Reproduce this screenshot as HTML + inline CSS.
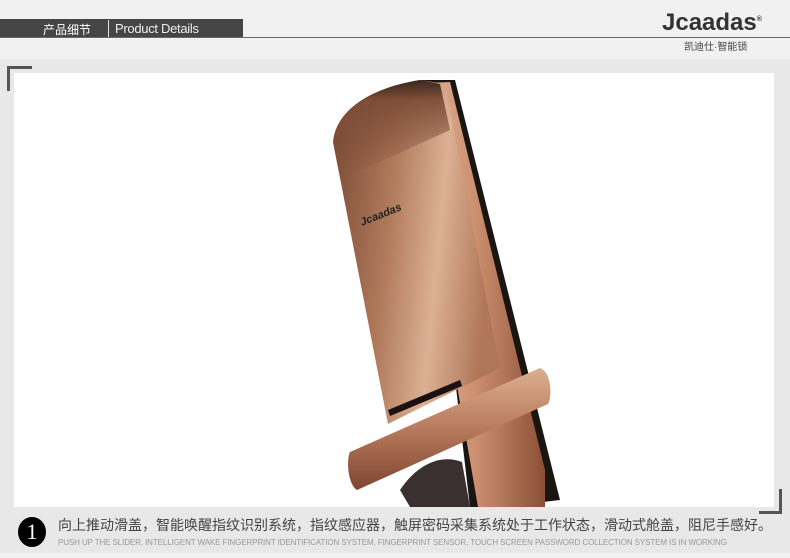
<!DOCTYPE html>
<html><head><meta charset="utf-8"><style>
body{margin:0;width:790px;height:558px;overflow:hidden;background:#f1f1f1;font-family:"Liberation Sans","Noto Sans CJK SC",sans-serif;position:relative}
.bar{position:absolute;left:0;top:19px;width:243px;height:18px;background:#454545}
.line{position:absolute;left:0;top:37px;width:790px;height:1px;background:#6a6a6a}
.t1{position:absolute;left:43px;top:21px;color:#fff;font-size:12px}
.sep{position:absolute;left:108px;top:20px;width:1px;height:17px;background:#ddd}
.t2{position:absolute;left:115px;top:21px;color:#eee;font-size:13px;letter-spacing:-.3px}
.logo{position:absolute;left:662px;top:9px;font-size:24px;font-weight:bold;color:#333;letter-spacing:0px}
.sub{position:absolute;left:684px;top:38px;font-size:10px;color:#444}
.panel{position:absolute;left:0;top:59px;width:790px;height:494px;background:#e8e8e8}
.img{position:absolute;left:14px;top:73px;width:760px;height:434px;background:#fff;overflow:hidden}
.c1{position:absolute;left:7px;top:66px;width:22px;height:22px;border-left:3px solid #555;border-top:3px solid #555}
.c2{position:absolute;left:759px;top:489px;width:20px;height:22px;border-right:3px solid #555;border-bottom:3px solid #555}
.num{position:absolute;left:18px;top:517px;width:28px;height:30px;border-radius:50%;background:#000;color:#fff;font-size:22px;text-align:center;line-height:30px;font-family:"Liberation Serif",serif}
.cn{position:absolute;left:58px;top:515px;font-size:14px;color:#444}
.en{position:absolute;left:58px;top:538px;font-size:8px;color:#999;letter-spacing:-.1px}
</style></head><body>
<div class="bar"></div><div class="line"></div>
<div class="t1">产品细节</div><div class="sep"></div><div class="t2">Product Details</div>
<div class="logo">Jcaadas<sup style="font-size:7px">®</sup></div>
<div class="sub">凯迪仕·智能锁</div>
<div class="panel"></div>
<div class="img">
<svg width="760" height="434" viewBox="14 73 760 434">
<defs>
<linearGradient id="g1" x1="0" y1="0" x2="1" y2="0.2"><stop offset="0" stop-color="#7a4a34"/><stop offset=".4" stop-color="#b07a5c"/><stop offset=".7" stop-color="#dcb094"/><stop offset="1" stop-color="#b07658"/></linearGradient>
<linearGradient id="g2" x1="0" y1="0" x2="1" y2="0"><stop offset="0" stop-color="#e6bea2"/><stop offset=".5" stop-color="#cc9070"/><stop offset="1" stop-color="#8b4f36"/></linearGradient>
<linearGradient id="g3" x1="0" y1="0" x2="0" y2="1"><stop offset="0" stop-color="#2a1a14"/><stop offset=".2" stop-color="#7a4a34"/><stop offset="1" stop-color="#7a4a34" stop-opacity="0"/></linearGradient>
<linearGradient id="g4" x1="0" y1="0" x2="0" y2="1"><stop offset="0" stop-color="#dcae90"/><stop offset=".5" stop-color="#b87a5c"/><stop offset="1" stop-color="#7d4532"/></linearGradient>
</defs>
<polygon points="420,80 455,80 560,500 500,507 470,507" fill="#1b1512"/>
<path d="M405,84 L450,82 L545,470 L545,507 L478,507 Z" fill="url(#g2)"/>
<path d="M333,142 C336,110 370,88 420,80 L445,84 L500,368 L388,424 Z" fill="url(#g1)"/>
<path d="M333,142 C336,110 370,88 420,80 L440,84 L450,130 L340,180 Z" fill="url(#g3)" opacity=".9"/>
<polygon points="388,410 460,380 462,386 390,416" fill="#1a1210"/>
<path d="M350,452 L540,368 C552,372 552,398 548,404 L357,490 C348,485 346,460 350,452 Z" fill="url(#g4)"/>
<path d="M400,490 C420,460 445,455 462,462 L470,507 L410,507 Z" fill="#3a3030"/>
<text x="362" y="226" font-size="11" font-style="italic" font-weight="bold" fill="#222" transform="rotate(-22 362 226)" font-family="Liberation Sans">Jcaadas</text>
</svg>
</div>
<div class="c1"></div><div class="c2"></div>
<div class="num">1</div>
<div class="cn">向上推动滑盖，智能唤醒指纹识别系统，指纹感应器，触屏密码采集系统处于工作状态，滑动式舱盖，阻尼手感好。</div>
<div class="en">PUSH UP THE SLIDER, INTELLIGENT WAKE FINGERPRINT IDENTIFICATION SYSTEM, FINGERPRINT SENSOR, TOUCH SCREEN PASSWORD COLLECTION SYSTEM IS IN WORKING</div>
</body></html>
